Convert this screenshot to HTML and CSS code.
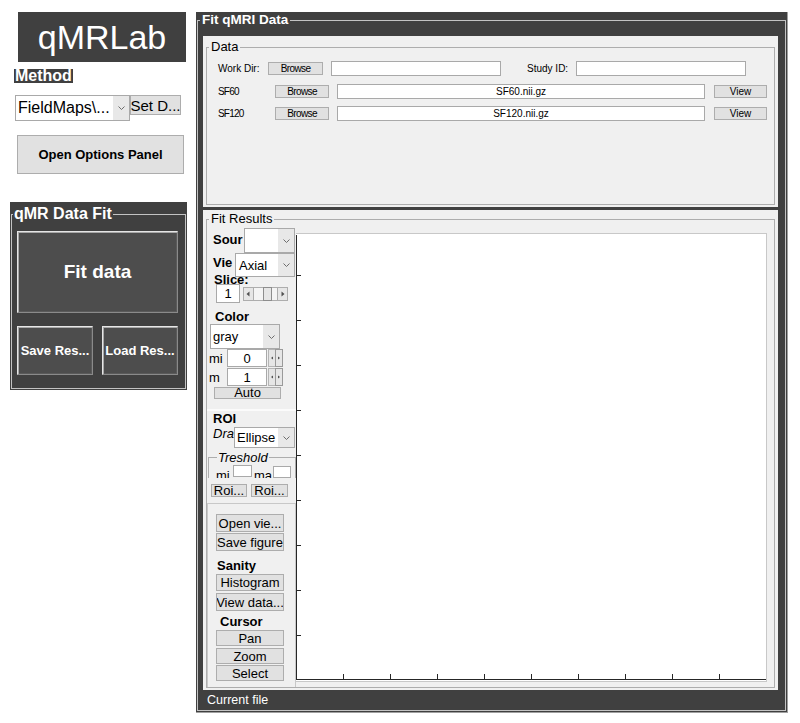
FILE: index.html
```html
<!DOCTYPE html>
<html>
<head>
<meta charset="utf-8">
<title>qMRLab</title>
<link rel="stylesheet" href="styles.css">
</head>
<body>
<div class="app">
  <aside class="side">
    <div class="logo">qMRLab</div>
    <div class="method">Method</div>
    <div class="method-row">
      <div class="popup pop-fm"><span class="pv">FieldMaps\...</span><span class="pa"><svg width="7" height="4" viewBox="0 0 7 4"><path d="M0.5 0.5 L3.5 3.5 L6.5 0.5" fill="none" stroke="#6d6d6d"/></svg></span></div>
      <div class="btn btn-setd">Set D...</div>
    </div>
    <div class="btn btn-opts">Open Options Panel</div>
    <section class="fitpanel">
      <div class="dframe">
        <div class="lg lg-qmr">qMR Data Fit</div>
        <div class="dbtn dbtn-fit">Fit data</div>
        <div class="dbtn-row">
          <div class="dbtn dbtn-sm">Save Res...</div>
          <div class="dbtn dbtn-sm">Load Res...</div>
        </div>
      </div>
    </section>
  </aside>

  <main class="main">
    <div class="mframe">
      <div class="lg lg-main">Fit qMRI Data</div>

      <section class="data">
        <div class="lframe">
          <div class="lg lg-light">Data</div>
          <div class="drow drow1">
            <span class="dl dl-work">Work Dir:</span>
            <span class="sbtn sbtn-w55">Browse</span>
            <span class="dedit de-170 ml8"></span>
            <span class="dl dl-study">Study ID:</span>
            <span class="dedit de-170"></span>
          </div>
          <div class="drow drow2">
            <span class="dl dl-sf">SF60</span>
            <span class="sbtn sbtn-w54">Browse</span>
            <span class="dedit de-368 ml8">SF60.nii.gz</span>
            <span class="sbtn sbtn-view">View</span>
          </div>
          <div class="drow drow3">
            <span class="dl dl-sf">SF120</span>
            <span class="sbtn sbtn-w54">Browse</span>
            <span class="dedit de-368 ml8">SF120.nii.gz</span>
            <span class="sbtn sbtn-view">View</span>
          </div>
        </div>
      </section>

      <section class="fr">
        <div class="lframe">
          <div class="lg lg-light">Fit Results</div>
          <div class="fr-body">
            <div class="ctrl">
              <div class="crow r-src">
                <span class="clbl cl-src">Sour</span>
                <div class="popup pop-src"><span class="pv"></span><span class="pa"><svg width="7" height="4" viewBox="0 0 7 4"><path d="M0.5 0.5 L3.5 3.5 L6.5 0.5" fill="none" stroke="#6d6d6d"/></svg></span></div>
              </div>
              <div class="crow r-view">
                <span class="clbl cl-view">Vie</span>
                <div class="popup pop-view"><span class="pv">Axial</span><span class="pa"><svg width="7" height="4" viewBox="0 0 7 4"><path d="M0.5 0.5 L3.5 3.5 L6.5 0.5" fill="none" stroke="#6d6d6d"/></svg></span></div>
              </div>
              <div class="lbl-slice">Slice:</div>
              <div class="r-slice">
                <span class="edit ed-slice">1</span>
                <svg class="slider" width="45" height="14" viewBox="0 0 45 14">
                  <rect x="0.5" y="0.5" width="44" height="13" fill="#f4f4f4" stroke="#adadad"/>
                  <rect x="0.5" y="0.5" width="10" height="13" fill="#e6e6e6" stroke="#adadad"/>
                  <path d="M6.5 4.5 L3.5 7 L6.5 9.5 Z" fill="#505050"/>
                  <rect x="20.5" y="0.5" width="8" height="13" fill="#e6e6e6" stroke="#8d8d8d"/>
                  <rect x="34.5" y="0.5" width="10" height="13" fill="#e6e6e6" stroke="#adadad"/>
                  <path d="M38.5 4.5 L41.5 7 L38.5 9.5 Z" fill="#505050"/>
                </svg>
              </div>
              <div class="clbl-b lbl-color">Color</div>
              <div class="popup pop-gray"><span class="pv">gray</span><span class="pa"><svg width="7" height="4" viewBox="0 0 7 4"><path d="M0.5 0.5 L3.5 3.5 L6.5 0.5" fill="none" stroke="#6d6d6d"/></svg></span></div>
              <div class="r-num">
                <span class="nl">mi</span>
                <span class="edit ed-num">0</span>
                <svg class="spin" width="15" height="18" viewBox="0 0 15 18">
                  <rect x="0.5" y="0.5" width="7" height="17" fill="#e6e6e6" stroke="#b5b5b5"/>
                  <rect x="7.5" y="0.5" width="7" height="17" fill="#e6e6e6" stroke="#9a9a9a"/>
                  <path d="M5 7.5 L3 9 L5 10.5 Z" fill="#505050"/>
                  <path d="M10 7.5 L12 9 L10 10.5 Z" fill="#505050"/>
                </svg>
              </div>
              <div class="r-num r-num2">
                <span class="nl">m</span>
                <span class="edit ed-num">1</span>
                <svg class="spin" width="15" height="18" viewBox="0 0 15 18">
                  <rect x="0.5" y="0.5" width="7" height="17" fill="#e6e6e6" stroke="#b5b5b5"/>
                  <rect x="7.5" y="0.5" width="7" height="17" fill="#e6e6e6" stroke="#9a9a9a"/>
                  <path d="M5 7.5 L3 9 L5 10.5 Z" fill="#505050"/>
                  <path d="M10 7.5 L12 9 L10 10.5 Z" fill="#505050"/>
                </svg>
              </div>
              <div class="btn btn-auto">Auto</div>

              <div class="roi">
                <div class="clbl-b lbl-roi">ROI</div>
                <div class="crow r-dra">
                  <span class="clbl cl-dra">Dra</span>
                  <div class="popup pop-dra"><span class="pv">Ellipse</span><span class="pa"><svg width="7" height="4" viewBox="0 0 7 4"><path d="M0.5 0.5 L3.5 3.5 L6.5 0.5" fill="none" stroke="#6d6d6d"/></svg></span></div>
                </div>
                <div class="thr-wrap">
                  <div class="thr">
                    <div class="lg lg-thr">Treshold</div>
                    <div class="r-thr">
                      <span class="tl tl-mi">mi</span>
                      <span class="edit ed-thr1"></span>
                      <span class="tl tl-ma">ma</span>
                      <span class="edit ed-thr2"></span>
                    </div>
                  </div>
                </div>
                <div class="r-roibtn">
                  <div class="btn btn-roi1">Roi...</div>
                  <div class="btn btn-roi2">Roi...</div>
                </div>
              </div>

              <div class="secc">
                <div class="btn cb cb-open">Open vie...</div>
                <div class="btn cb cb-save">Save figure</div>
                <div class="clbl-b lbl-san">Sanity</div>
                <div class="btn cb cb-hist">Histogram</div>
                <div class="btn cb cb-vdata">View data...</div>
                <div class="clbl-b lbl-cur">Cursor</div>
                <div class="btn cb cb-pan">Pan</div>
                <div class="btn cb cb-zoom">Zoom</div>
                <div class="btn cb cb-sel">Select</div>
              </div>
            </div>

            <div class="plot">
              <svg width="470" height="447" viewBox="0 0 470 447">
                <g stroke="#262626" stroke-width="1" fill="none">
                  <path d="M0.5 1 V446"/>
                  <path d="M0 445.5 H470"/>
                  <path d="M0 41.5 H5 M0 86.5 H5 M0 131.5 H5 M0 176.5 H5 M0 221.5 H5 M0 266.5 H5 M0 311.5 H5 M0 356.5 H5 M0 401.5 H5"/>
                  <path d="M47.5 445 V440 M94.5 445 V440 M141.5 445 V440 M188.5 445 V440 M235.5 445 V440 M282.5 445 V440 M329.5 445 V440 M376.5 445 V440 M423.5 445 V440"/>
                </g>
              </svg>
            </div>
          </div>
        </div>
      </section>

      <div class="curfile">Current file</div>
    </div>
  </main>
</div>
</body>
</html>
```

FILE: styles.css
```css
* { box-sizing: border-box; }

body {
  margin: 0;
  background: #ffffff;
  font-family: "Liberation Sans", Arial, sans-serif;
  color: #000;
}

.app {
  display: flex;
  align-items: flex-start;
  width: 800px;
  height: 723px;
  overflow: hidden;
}

/* ---------- sidebar ---------- */
.side { width: 196px; flex: none; }

.logo {
  margin: 12px 0 0 18px;
  width: 168px;
  height: 50px;
  background: #404040;
  color: #fff;
  font-size: 34px;
  display: flex;
  align-items: center;
  justify-content: center;
  line-height: 1;
  padding-bottom: 1px;
}

.method {
  margin: 7px 0 0 14px;
  width: fit-content;
  height: 14px;
  line-height: 14px;
  background: #404040;
  color: #fff;
  font-weight: bold;
  font-size: 16px;
  padding: 0 1px;
}

.method-row {
  display: flex;
  align-items: flex-start;
  margin: 12px 0 0 15px;
}

.popup {
  display: flex;
  background: #fff;
  border: 1px solid #a9a9a9;
  font-size: 13px;
  flex: none;
}
.pv {
  flex: 1;
  padding-left: 2px;
  overflow: hidden;
  white-space: nowrap;
  align-self: center;
}
.pa {
  width: 16px;
  flex: none;
  background: #e8e8e8;
  display: flex;
  align-items: center;
  justify-content: center;
}

.pop-fm { width: 115px; height: 26px; font-size: 16px; }

.btn {
  background: #e1e1e1;
  border: 1px solid #adadad;
  display: flex;
  align-items: center;
  justify-content: center;
  white-space: nowrap;
  overflow: hidden;
  font-size: 13px;
  flex: none;
}

.btn-setd { width: 51px; height: 20px; font-size: 15px; }

.btn-opts {
  margin: 14px 0 0 17px;
  width: 167px;
  height: 39px;
  font-weight: bold;
  font-size: 13px;
}

.fitpanel {
  margin: 28px 0 0 10px;
  width: 177px;
  height: 188px;
  background: #404040;
  padding: 12px 1px 1px 1px;
}

.dframe {
  height: 100%;
  border: 1px solid #c3c3c3;
}

.lg {
  width: fit-content;
  white-space: nowrap;
}

.lg-qmr {
  margin: -10px 0 0 1px;
  padding: 0 1px;
  line-height: 18px;
  font-size: 16px;
  font-weight: bold;
  color: #fff;
  background: #404040;
}

.dbtn {
  background: #4d4d4d;
  color: #fff;
  font-weight: bold;
  display: flex;
  align-items: center;
  justify-content: center;
  white-space: nowrap;
  overflow: hidden;
  border: 1px solid;
  border-color: #e6e6e6 #8a8a8a #8a8a8a #e6e6e6;
  box-shadow: inset 1px 1px 0 #a8a8a8, inset -1px -1px 0 #5a5a5a;
}
.dbtn-fit { margin: 8px 0 0 5px; width: 161px; height: 82px; font-size: 19px; }
.dbtn-row { display: flex; gap: 9px; margin: 13px 0 0 5px; }
.dbtn-sm { width: 76px; height: 49px; font-size: 13px; }

/* ---------- main panel ---------- */
.main {
  flex: none;
  width: 592px;
  height: 701px;
  margin-top: 12px;
  background: #404040;
  border-right: 1px solid #a0a0a0;
  border-bottom: 1px solid #a0a0a0;
  padding: 8px 1px 0 1px;
}

.mframe {
  height: 691px;
  border: 1px solid #c3c3c3;
}

.lg-main {
  margin: -9px 0 0 2px;
  padding: 0 2px;
  line-height: 16px;
  font-size: 13.5px;
  font-weight: bold;
  color: #fff;
  background: #404040;
}

.data {
  margin: 8px 0 0 5px;
  width: 575px;
  height: 171px;
  background: #f0f0f0;
  padding: 11px 3px 2px 3px;
}

.lframe {
  height: 100%;
  border: 1px solid #adadad;
}

.lg-light {
  margin: -9px 0 0 2px;
  padding: 0 2px;
  line-height: 16px;
  font-size: 13px;
  background: #f0f0f0;
}

.drow {
  display: flex;
  align-items: center;
  height: 15px;
  padding-left: 11px;
  font-size: 10px;
}
.drow1 { margin-top: 6px; }
.drow2 { margin-top: 8px; }
.drow3 { margin-top: 7px; }

.dl { flex: none; white-space: nowrap; }
.dl-work { width: 50px; }
.dl-study { width: 49px; margin-left: 26px; }
.dl-sf { width: 57px; letter-spacing: -0.8px; }

.sbtn {
  flex: none;
  height: 13px;
  line-height: 11px;
  background: #e1e1e1;
  border: 1px solid #adadad;
  text-align: center;
  letter-spacing: -0.6px;
  font-size: 10px;
}
.sbtn-w55 { width: 55px; }
.sbtn-w54 { width: 54px; }
.sbtn-view { width: 53px; margin-left: 9px; letter-spacing: 0; }

.dedit {
  flex: none;
  height: 15px;
  line-height: 13px;
  background: #fff;
  border: 1px solid #a9a9a9;
  text-align: center;
  font-size: 10px;
}
.de-170 { width: 170px; }
.de-368 { width: 368px; }
.ml8 { margin-left: 8px; }

.fr {
  margin: 3px 0 0 5px;
  width: 575px;
  height: 480px;
  background: #f0f0f0;
  padding: 9px 3px 2px 3px;
}

.fr-body {
  display: flex;
  align-items: flex-start;
}

.ctrl {
  width: 89px;
  flex: none;
  margin-top: 1px;
  font-size: 13px;
}

.crow { display: flex; }
.clbl {
  flex: none;
  align-self: flex-start;
  line-height: 15px;
  font-weight: bold;
  overflow: hidden;
  white-space: nowrap;
  padding-left: 6px;
}
.r-src { height: 25px; }
.cl-src { width: 37px; padding-top: 4px; }
.pop-src { width: 51px; height: 25px; }
.r-view { height: 24px; }
.cl-view { width: 28px; padding-top: 2px; }
.pop-view { width: 60px; height: 24px; position: relative; padding-left: 1px; }

.lbl-slice {
  margin-top: -5px;
  height: 12px;
  line-height: 15px;
  overflow: hidden;
  padding-left: 7px;
  font-weight: bold;
}

.r-slice {
  display: flex;
  align-items: flex-start;
  height: 19px;
  padding-left: 9px;
}
.edit {
  flex: none;
  background: #fff;
  border: 1px solid #a9a9a9;
  text-align: center;
  display: flex;
  align-items: center;
  justify-content: center;
}
.ed-slice { width: 24px; height: 19px; }
.slider { margin: 3px 0 0 3px; flex: none; }

.clbl-b {
  line-height: 15px;
  font-weight: bold;
  white-space: nowrap;
}
.lbl-color { margin-top: 6px; padding-left: 8px; }
.pop-gray { margin-left: 3px; width: 70px; height: 25px; }

.r-num {
  display: flex;
  align-items: center;
  height: 18px;
}
.r-num2 { margin-top: 1px; }
.nl { width: 20px; padding-left: 2px; flex: none; }
.ed-num { width: 40px; height: 18px; }
.spin { margin-left: 1px; flex: none; }

.btn-auto {
  margin: 1px 0 0 7px;
  width: 67px;
  height: 12px;
  overflow: visible;
  line-height: 10px;
}

.roi {
  margin-top: 10px;
  border-top: 2px solid #fbfbfb;
}
.lbl-roi { padding-left: 6px; }
.r-dra { height: 21px; margin-top: 1px; }
.cl-dra { width: 27px; font-weight: normal; font-style: italic; line-height: 14px; }
.pop-dra { width: 61px; height: 21px; }

.thr-wrap { height: 30px; overflow: hidden; }
.thr {
  margin: 9px 0 0 1px;
  border: 1px solid #adadad;
  height: 40px;
}
.lg-thr {
  margin: -8px 0 0 8px;
  padding: 0 1px;
  line-height: 15px;
  font-style: italic;
  background: #f0f0f0;
}
.r-thr {
  display: flex;
  align-items: flex-start;
  margin-top: -1px;
}
.tl { flex: none; padding-top: 6px; line-height: 12px; height: 18px; }
.tl-mi { width: 24px; padding-left: 7px; }
.tl-ma { width: 21px; padding-left: 2px; }
.ed-thr1 { width: 19px; height: 12px; margin-top: 1px; }
.ed-thr2 { width: 18px; height: 12px; margin-top: 2px; }

.r-roibtn {
  display: flex;
  gap: 4px;
  margin: 6px 0 0 4px;
}
.btn-roi1 { width: 36px; height: 13px; }
.btn-roi2 { width: 37px; height: 13px; }

.secc {
  margin-top: 6px;
  border: 1px solid #c8c8c8;
  border-bottom: none;
  height: 184px;
}
.cb { margin-left: 8px; width: 68px; }
.cb-open { margin-top: 10px; height: 18px; }
.cb-save { margin-top: 1px; height: 18px; }
.lbl-san { margin-top: 7px; padding-left: 9px; }
.cb-hist { margin-top: 1px; height: 17px; }
.cb-vdata { margin-top: 2px; height: 18px; }
.lbl-cur { margin-top: 3px; padding-left: 12px; }
.cb-pan { margin-top: 1px; height: 16px; }
.cb-zoom { margin-top: 2px; height: 16px; }
.cb-sel { margin-top: 1px; height: 16px; }

.plot {
  flex: none;
  width: 471px;
  height: 449px;
  margin-top: 6px;
  background: #fff;
  border-top: 1px solid #c8c8c8;
  border-right: 1px solid #c8c8c8;
  border-bottom: 1px solid #c8c8c8;
}
.plot svg { display: block; }

.curfile {
  margin: 3px 0 0 9px;
  color: #fff;
  font-size: 12.5px;
  line-height: 15px;
}
```
